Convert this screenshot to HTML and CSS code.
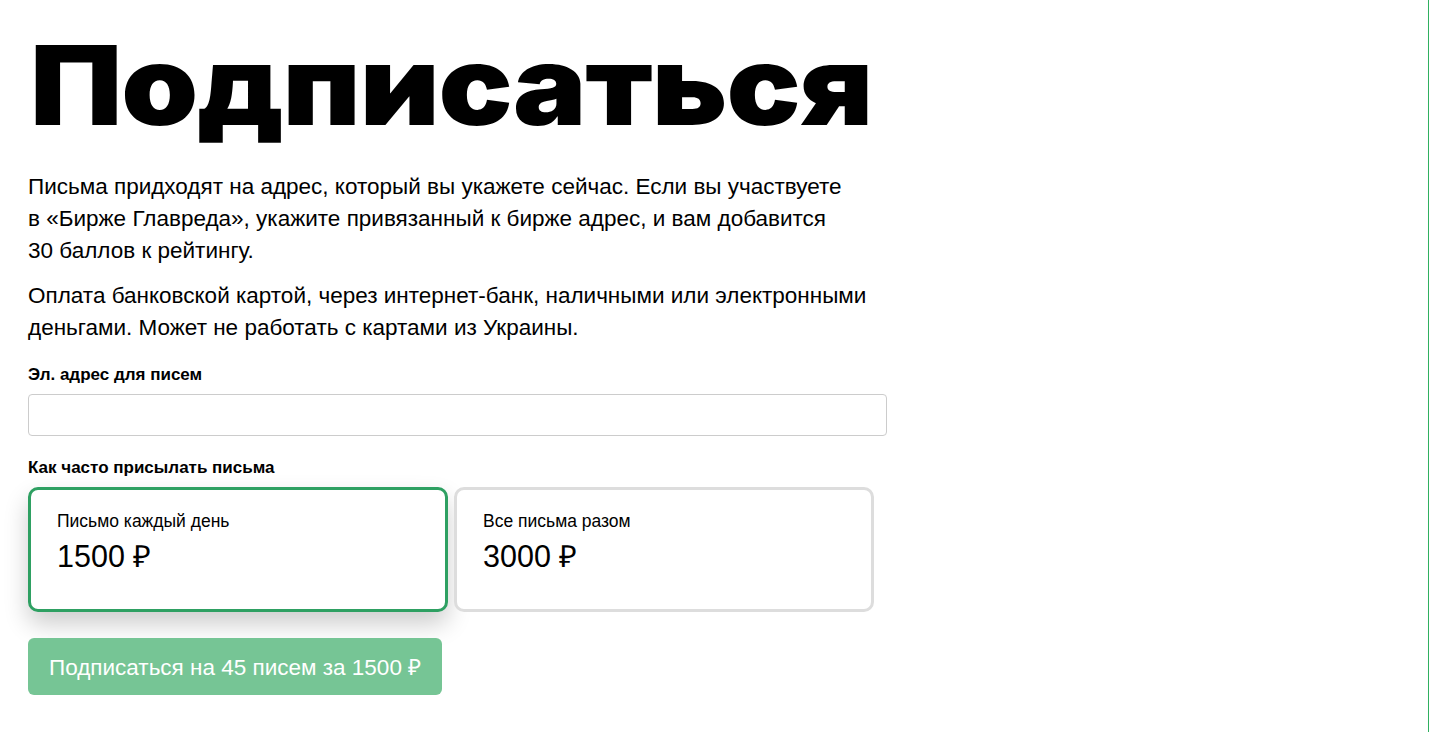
FILE: index.html
```html
<!DOCTYPE html>
<html lang="ru">
<head>
    <meta charset="UTF-8">
    <meta name="viewport" content="width=device-width, initial-scale=1.0">
    <title>Подписаться</title>
    <link rel="stylesheet" href="styles.css">
</head>
<body>
    <div class="page">
        <h1 class="title">Подписаться</h1>

        <p class="lead">Письма придходят на адрес, который вы укажете сейчас. Если вы участвуете<br>в «Бирже Главреда», укажите привязанный к бирже адрес, и вам добавится<br>30 баллов к рейтингу.</p>
        <p class="lead">Оплата банковской картой, через интернет-банк, наличными или электронными<br>деньгами. Может не работать с картами из Украины.</p>

        <form class="subscribe">
            <label class="field-label" for="email">Эл. адрес для писем</label>
            <input class="field" type="email" id="email">

            <div class="field-label">Как часто присылать письма</div>
            <div class="plans">
                <div class="plan active">
                    <div class="plan-name">Письмо каждый день</div>
                    <div class="plan-price">1500 ₽</div>
                </div>
                <div class="plan">
                    <div class="plan-name">Все письма разом</div>
                    <div class="plan-price">3000 ₽</div>
                </div>
            </div>

            <button class="submit" type="button">Подписаться на 45 писем за 1500 ₽</button>
        </form>
    </div>
</body>
</html>
```

FILE: styles.css
```css
html, body {
    height: 100%;
}
body {
    margin: 0;
    font-family: "Liberation Sans", Arial, sans-serif;
    color: #000;
    background-color: #fff;
    border-right: 1px solid #2fb060;
    box-sizing: border-box;
    overflow: hidden;
}
.page {
    width: 860px;
    padding: 18px 0 0 28px;
}
.title {
    margin: 0 0 0 2px;
    font-family: Inter, "Open Sans", sans-serif;
    font-weight: 900;
    font-size: 110px;
    line-height: 134px;
    letter-spacing: -1px;
    transform: scaleX(1.12);
    transform-origin: left center;
}
.lead {
    margin: 0 0 13px;
    font-size: 22.5px;
    line-height: 32px;
}
.lead:first-of-type {
    margin-top: 19px;
}
.subscribe {
    display: flex;
    flex-direction: column;
    align-items: flex-start;
    margin-top: 21px;
}
.field-label {
    font-size: 17px;
    font-weight: bold;
    line-height: 20px;
    margin-bottom: 9px;
}
.field {
    width: 859px;
    height: 42px;
    box-sizing: border-box;
    border: 1px solid #ccc;
    border-radius: 4px;
    margin-bottom: 22px;
    font: inherit;
    padding: 0 12px;
}
.plans {
    display: flex;
    gap: 6px;
}
.plan {
    width: 420px;
    height: 125px;
    box-sizing: border-box;
    border: 3px solid #ddd;
    border-radius: 10px;
    padding: 21px 26px;
    background-color: #fff;
}
.plan.active {
    border-color: #2ea062;
    box-shadow: 0 12px 24px rgba(0, 0, 0, 0.2);
}
.plan-name {
    font-size: 17.5px;
    line-height: 20px;
}
.plan-price {
    margin-top: 8px;
    font-size: 30.5px;
    line-height: 34px;
}
.submit {
    margin-top: 26px;
    height: 57px;
    padding: 0 21px;
    border: none;
    border-radius: 6px;
    background-color: #76c595;
    color: #fff;
    font-family: inherit;
    font-size: 22.5px;
    cursor: pointer;
}
```
